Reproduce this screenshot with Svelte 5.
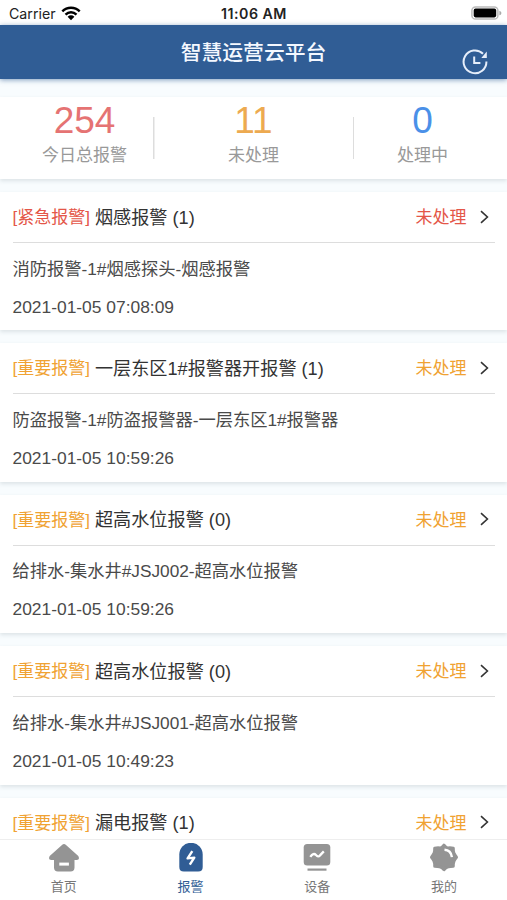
<script>
  let current = $state('alarm');

  const summary = [
    { count: 254, label: '今日总报警', color: 'red' },
    { count: 11, label: '未处理', color: 'orange' },
    { count: 0, label: '处理中', color: 'blue' },
  ];

  const alarms = [
    { level: '紧急报警', urgent: true, name: '烟感报警', count: 1, detail: '消防报警-1#烟感探头-烟感报警', time: '2021-01-05 07:08:09' },
    { level: '重要报警', name: '一层东区1#报警器开报警', count: 1, detail: '防盗报警-1#防盗报警器-一层东区1#报警器', time: '2021-01-05 10:59:26' },
    { level: '重要报警', name: '超高水位报警', count: 0, detail: '给排水-集水井#JSJ002-超高水位报警', time: '2021-01-05 10:59:26' },
    { level: '重要报警', name: '超高水位报警', count: 0, detail: '给排水-集水井#JSJ001-超高水位报警', time: '2021-01-05 10:49:23' },
    { level: '重要报警', name: '漏电报警', count: 1 },
  ];

  const tabs = [
    { id: 'home', text: '首页' },
    { id: 'alarm', text: '报警' },
    { id: 'device', text: '设备' },
    { id: 'mine', text: '我的' },
  ];
</script>

<div class="page">
  <div class="status-bar">
    <div class="carrier">
      <span>Carrier</span>
      <svg width="20" height="15" viewBox="0 0 20 15">
        <g fill="none" stroke="#000" stroke-width="2.5">
          <path d="M1.3 5.3C6.2 .6 13.8 .6 18.7 5.3" />
          <path d="M4.5 8.6c3.2-3 7.8-3 11 0" />
        </g>
        <path d="M6.6 10.7c2-1.8 4.8-1.8 6.8 0L10 14.2z" />
      </svg>
    </div>
    <div class="clock">11:06 AM</div>
    <div class="battery">
      <svg width="31" height="14" viewBox="0 0 31 14">
        <rect x=".9" y=".9" width="26" height="12.2" rx="3.6" fill="#fff" stroke="#bbb" stroke-width="1.5" />
        <rect x="2.7" y="2.6" width="22.5" height="8.8" rx="1.8" />
        <path d="M28.4 4.7c2.6.9 2.6 3.7 0 4.6z" fill="#aaa" />
      </svg>
    </div>
  </div>

  <header>
    <h1>智慧运营云平台</h1>
    <button class="history" aria-label="history">
      <svg width="26" height="26" viewBox="0 0 26 26" fill="none" stroke="#e6eefa" stroke-width="2">
        <path d="M21 4.700A11.400 11.400 0 1 0 24.400 12.500" />
        <path d="M24.800 2.500v6.500h-5.500z" fill="#e6eefa" stroke="none" />
        <path d="M12.2 7.600v6.400h6.200" />
      </svg>
    </button>
  </header>

  <main>
    <section class="summary">
      {#each summary as item}
        <div class="summary-item">
          <div class="num {item.color}">{item.count}</div>
          <div class="label">{item.label}</div>
        </div>
      {/each}
    </section>

    {#each alarms as alarm}
      <section class="card">
        <div class="card-head">
          <span class="level" class:urgent={alarm.urgent}>[{alarm.level}]</span>
          <span class="name">{alarm.name} ({alarm.count})</span>
          <span class="state" class:urgent={alarm.urgent}>未处理</span>
          <svg class="arrow" width="9" height="14" viewBox="0 0 9 14" fill="none" stroke="#333" stroke-width="1.6">
            <path d="M1 1.2L7.4 7 1 12.8" />
          </svg>
        </div>
        {#if alarm.detail}
          <p>{alarm.detail}</p>
          <p class="time">{alarm.time}</p>
        {/if}
      </section>
    {/each}
  </main>

  <nav>
    {#each tabs as tab}
      <button class="tab" class:active={current === tab.id} onclick={() => (current = tab.id)}>
        <svg width="32" height="30" viewBox="0 0 32 30">
          {#if tab.id === 'home'}
            <path fill="currentColor" d="M14 1.900Q16 .3 18 1.900L30.300 13Q32.200 16.600 28.800 17H26.500v7.500Q26.500 28.500 22.500 28.500H10Q6 28.500 6 24.500V17H3.200Q-.2 16.600 1.700 13z" />
            <rect x="11.300" y="19.600" width="9.600" height="3" fill="#fff" />
          {:else if tab.id === 'alarm'}
            <path fill="currentColor" d="M4.300 11.500a11.700 11.700 0 0 1 23.400 0V24q0 4.500-4.500 4.500H8.800q-4.500 0-4.500-4.500z" />
            <path d="M17.300 8.200l-4.700 7.200 6.700-.8-4.500 7" fill="none" stroke="#fff" stroke-width="2.400" stroke-linejoin="round" />
          {:else if tab.id === 'device'}
            <rect x="2.700" y=".9" width="26.600" height="21.600" rx="3.500" fill="currentColor" />
            <path d="M9.300 13.800q3.200-4.500 5.700-1.800 2.200 2.400 4 .4l3.800-4" fill="none" stroke="#fff" stroke-width="2.300" />
            <path d="M6.500 26.600h19" stroke="currentColor" stroke-width="2.200" />
          {:else}
            <path fill="currentColor" stroke="currentColor" stroke-width="3" stroke-linejoin="round" d="M16 2.200q2 3 4.200 2.700 2.200-.4 5.100.3-.2 3 .8 5.200 1 2 2.400 3.800-1.600 2-2.500 4-.9 2.200-.7 5-3 0-5 .6-2.300.6-4.300 2.900-2-2.300-4.300-2.900-2-.6-5-.6.200-2.800-.7-5-.9-2-2.500-4 1.400-1.800 2.400-3.800 1-2.200.8-5.200 2.900-.7 5.100-.3 2.200.3 4.200-2.700z" />
            <path d="M16.500 6.800q6.500.3 7.400 7.400" fill="none" stroke="#fff" stroke-width="2.400" />
          {/if}
        </svg>
        <span>{tab.text}</span>
      </button>
    {/each}
  </nav>
</div>

<style>
  :global(body) {
    margin: 0;
    background: #fff;
  }

  .page {
    display: flex;
    flex-direction: column;
    height: 900px;
    overflow: hidden;
    background: #f8fcfe;
    font-family: "Liberation Sans", "Noto Sans CJK SC", sans-serif;
    color: #4a4a4a;
  }

  button {
    border: none;
    background: none;
    padding: 0;
    font-family: inherit;
  }

  svg {
    display: block;
  }

  .status-bar {
    display: grid;
    grid-template-columns: 1fr auto 1fr;
    align-items: center;
    flex: none;
    height: 25px;
    padding: 1px 5px 0 9px;
    box-sizing: border-box;
    background: #fff;
    font-family: Inter, sans-serif;
    font-size: 14.200px;
    color: #222;
  }

  .carrier {
    display: flex;
    align-items: center;
    gap: 5px;
  }

  .clock {
    margin-right: 3px;
    font-weight: 600;
    letter-spacing: 0.5px;
  }

  .battery {
    justify-self: end;
  }

  header {
    display: grid;
    grid-template-columns: 1fr auto 1fr;
    flex: none;
    height: 54px;
    background: #305d95;
    box-shadow: 0 1px 5px rgba(48, 93, 149, 0.6);
    z-index: 1;
  }

  h1 {
    grid-column: 2;
    margin: 0;
    font-size: 20.800px;
    font-weight: 500;
    line-height: 56px;
    color: #f4f8ff;
  }

  .history {
    justify-self: end;
    align-self: end;
    margin: 0 19px 6px 0;
  }

  main {
    flex: 1;
    overflow: hidden;
    padding-top: 18px;
  }

  .summary {
    display: grid;
    grid-template-columns: repeat(3, 1fr);
    height: 82px;
    margin-bottom: 13px;
    background: #fff;
    box-shadow: 0 2px 4px rgba(60, 80, 90, 0.14);
    text-align: center;
  }

  .summary-item {
    display: flex;
    flex-direction: column;
    align-items: center;
  }

  .summary-item:nth-child(2) {
    background:
      linear-gradient(#ddd, #ddd) 0 20px / 1.500px 42px no-repeat,
      linear-gradient(#ddd, #ddd) 100% 20px / 1.500px 42px no-repeat;
    margin: 0 -16px;
  }

  .num {
    font-size: 37px;
    line-height: 48px;
    height: 47px;
  }

  .red {
    color: #e57373;
  }

  .orange {
    color: #edaa50;
  }

  .blue {
    color: #4a90e8;
  }

  .label {
    font-size: 17px;
    line-height: 24px;
    color: #999;
  }

  .card {
    height: 138.400px;
    margin-bottom: 13px;
    padding: 0 12.500px;
    box-sizing: border-box;
    background: #fff;
    box-shadow: 0 2px 4px rgba(60, 80, 90, 0.14);
  }

  .card-head {
    display: flex;
    align-items: center;
    height: 50px;
    margin-bottom: 6.600px;
    border-bottom: 1.500px solid #ddd;
    line-height: 26px;
  }

  .level,
  .state {
    padding-top: 2px;
    font-size: 17px;
    color: #f0a232;
  }

  .urgent {
    color: #e45648;
  }

  .name {
    flex: 1;
    margin-left: 5px;
    padding-top: 1px;
    font-size: 18.150px;
    color: #333;
  }

  .arrow {
    margin: 0 6px 1px 13px;
  }

  p {
    margin: 0;
    font-size: 17.250px;
    line-height: 38px;
    white-space: nowrap;
  }

  .time {
    font-size: 17.400px;
  }

  nav {
    display: grid;
    grid-template-columns: repeat(4, 1fr);
    flex: none;
    height: 61px;
    border-top: 1px solid #eee;
    box-sizing: border-box;
    background: #fff;
    z-index: 1;
  }

  .tab {
    display: flex;
    flex-direction: column;
    align-items: center;
    padding: 3px 0 0 1px;
    color: #949494;
    font-size: 13px;
    line-height: 20px;
  }

  .tab span {
    margin-top: 4px;
    color: #777;
  }

  .tab.active,
  .tab.active span {
    color: #305d95;
  }
</style>
